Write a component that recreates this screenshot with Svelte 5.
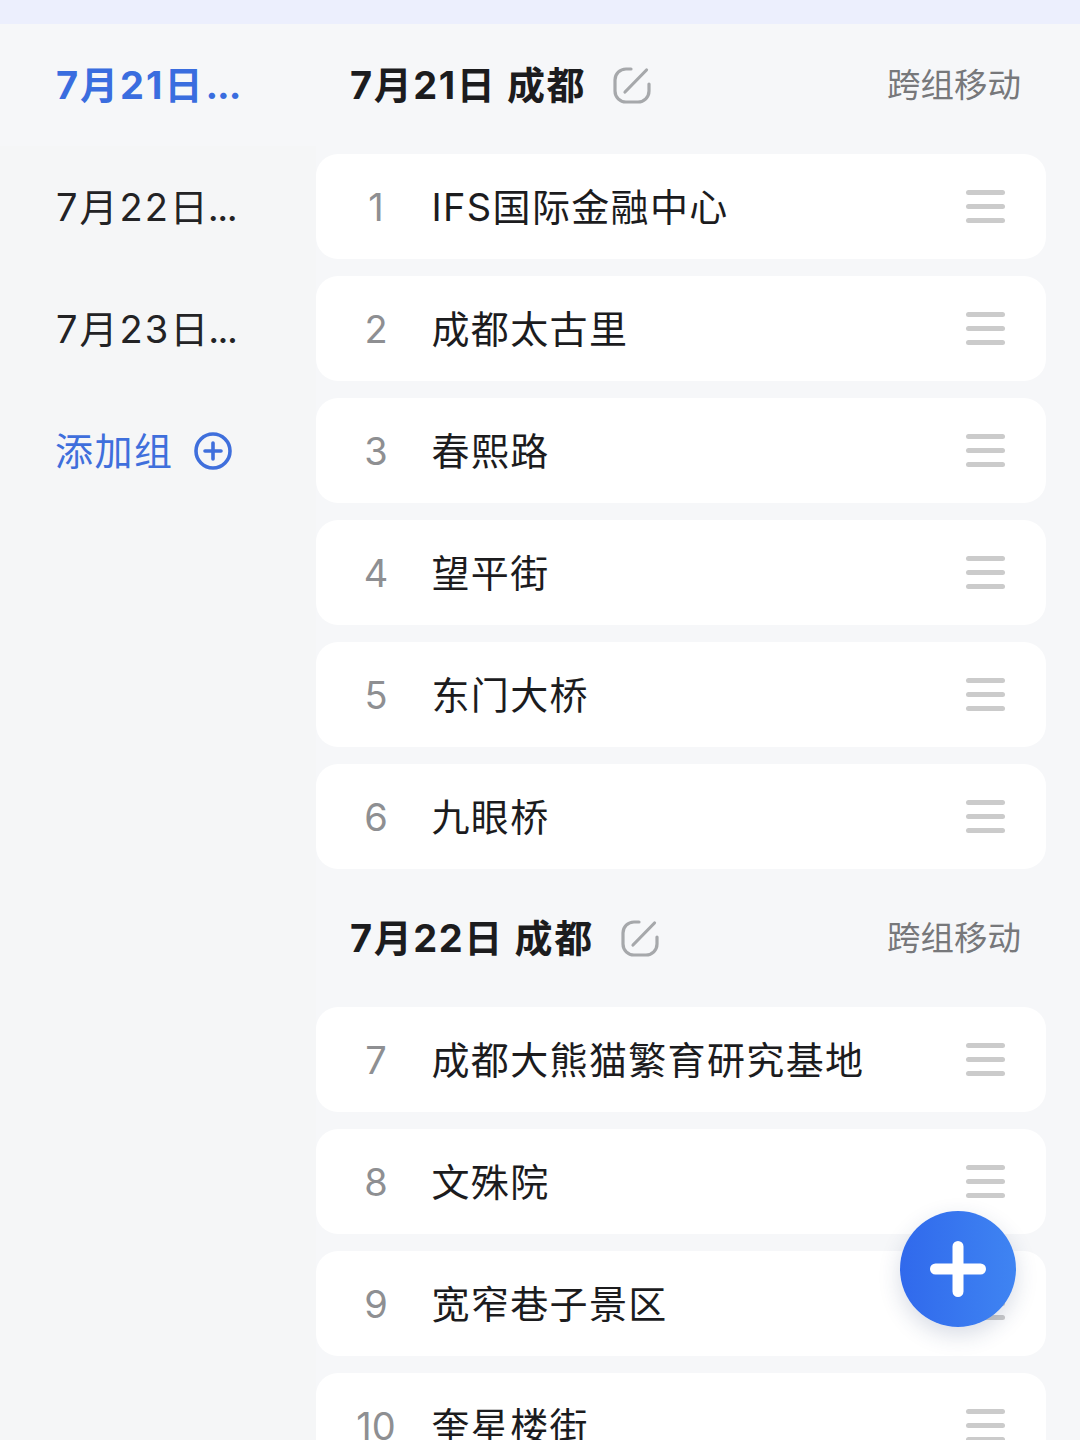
<script>
  const groups = [
    {
      title: '7月21日 成都',
      stops: ['IFS国际金融中心', '成都太古里', '春熙路', '望平街', '东门大桥', '九眼桥']
    },
    {
      title: '7月22日 成都',
      stops: ['成都大熊猫繁育研究基地', '文殊院', '宽窄巷子景区', '奎星楼街']
    }
  ];
  const tabs = ['7月21日', '7月22日', '7月23日'];
  let counter = 0;
  const numbered = groups.map((g) => ({
    ...g,
    stops: g.stops.map((name) => ({ name, no: ++counter }))
  }));
</script>

<div class="page">
  <div class="topbar"></div>
  <div class="body">
    <aside class="side">
      {#each tabs as tab, i}
        <div class="tab" class:active={i === 0}><span class="label">{tab}<span class="dots">...</span></span></div>
      {/each}
      <div class="tab add">
        <span class="label">添加组</span>
        <svg width="38" height="38" viewBox="0 0 38 38" fill="none" stroke="#3f6fdc" stroke-width="3.6" stroke-linecap="round">
          <circle cx="19" cy="19" r="17" />
          <path d="M11 19h16M19 11v16" />
        </svg>
      </div>
    </aside>

    <main class="list">
      {#each numbered as group}
        <header class="group-head">
          <h2>{group.title}</h2>
          <svg class="edit" width="38" height="37" viewBox="0 0 38 37" fill="none" stroke="#a6a8ab" stroke-width="3.2" stroke-linecap="round">
            <path d="M18 2H13A11 11 0 0 0 2 13V24A11 11 0 0 0 13 35H25A11 11 0 0 0 36 24V17" />
            <path d="M12 25L33.500 3" />
          </svg>
          <span class="move">跨组移动</span>
        </header>
        {#each group.stops as stop}
          <div class="card">
            <span class="no">{stop.no}</span>
            <span class="name">{stop.name}</span>
            <span class="handle"><i></i><i></i><i></i></span>
          </div>
        {/each}
      {/each}
    </main>
  </div>

  <button class="fab" aria-label="添加">
    <svg width="58" height="58" viewBox="0 0 58 58" fill="none" stroke="#fff" stroke-width="11" stroke-linecap="round">
      <path d="M6.500 29h45M29 6.500v45" />
    </svg>
  </button>
</div>

<style>
  :global(body) {
    margin: 0;
  }

  .page {
    position: relative;
    width: 1080px;
    height: 1440px;
    overflow: hidden;
    background: #f6f7f9;
    font-family: Inter, "Noto Sans CJK SC", sans-serif;
    color: #1c1c1e;
  }

  .topbar {
    height: 24px;
    background: #eceffd;
  }

  .body {
    display: grid;
    grid-template-columns: 316px 730px;
  }

  .side {
    background: #f5f6f7;
    height: 1416px;
  }

  .tab {
    display: flex;
    align-items: center;
    height: 122px;
    padding-left: 56px;
    font-size: 38px;
    letter-spacing: 2px;
    color: #232325;
  }

  .label {
    padding-bottom: 5px;
  }

  .dots {
    letter-spacing: -1.5px;
    margin-left: -2px;
  }

  .tab.active {
    background: #f6f7f9;
    color: #3a6ddf;
    font-weight: 700;
  }

  .tab.active .dots {
    letter-spacing: -1px;
    margin-left: 1px;
  }

  .tab.add {
    gap: 20px;
    padding-left: 55px;
    color: #3f6fdc;
    letter-spacing: 1.5px;
  }

  .list {
    display: flex;
    flex-direction: column;
    gap: 17px;
    padding-top: 9px;
  }

  .group-head {
    display: flex;
    align-items: center;
    height: 104px;
    padding: 0 25px 0 34px;
    flex-shrink: 0;
  }

  h2 {
    margin: 0;
    padding-bottom: 6px;
    font-size: 38px;
    font-weight: 700;
    letter-spacing: 1.6px;
    color: #1c1c1e;
  }

  .edit {
    margin-left: 27px;
  }

  .move {
    margin-left: auto;
    padding-bottom: 5px;
    font-size: 33.500px;
    color: #77787b;
  }

  .card {
    display: flex;
    align-items: center;
    flex-shrink: 0;
    height: 105px;
    background: #fff;
    border-radius: 22px;
  }

  .no {
    width: 120px;
    margin-right: -4.500px;
    text-align: center;
    font-size: 38px;
    color: #8e8f92;
  }

  .name {
    padding-bottom: 5px;
    font-size: 38px;
    letter-spacing: 1.35px;
    color: #1c1c1e;
  }

  .handle {
    display: flex;
    flex-direction: column;
    gap: 9px;
    width: 39px;
    margin-left: auto;
    margin-right: 41px;
  }

  .handle i {
    display: block;
    height: 5px;
    border-radius: 2.500px;
    background: #cbcbcb;
  }

  .fab {
    position: absolute;
    left: 900px;
    top: 1211px;
    display: flex;
    align-items: center;
    justify-content: center;
    width: 116px;
    height: 116px;
    padding: 0;
    border: none;
    border-radius: 50%;
    background: linear-gradient(90deg, #3069ec, #3f84f2);
    box-shadow: 0 8px 22px rgba(40, 60, 110, 0.18);
  }
</style>
